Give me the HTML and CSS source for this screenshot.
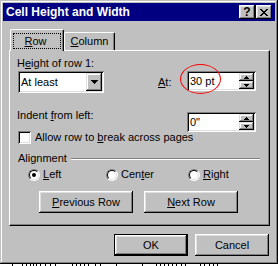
FILE: index.html
```html
<!DOCTYPE html>
<html>
<head>
<meta charset="utf-8">
<link rel="stylesheet" href="styles.css">
</head>
<body>
<div class="window">
  <div class="titlebar">
    <span class="title">Cell Height and Width</span>
    <span class="tbtn help">?</span>
    <span class="tbtn close"><svg width="8" height="7" viewBox="0 0 8 7"><path d="M0 0h2v1H0zM6 0h2v1H6zM1 1h2v1H1zM5 1h2v1H5zM2 2h4v1H2zM3 3h2v1H3zM2 4h4v1H2zM1 5h2v1H1zM5 5h2v1H5zM0 6h2v1H0zM6 6h2v1H6z"/></svg></span>
  </div>
  <div class="body">
    <div class="tabs">
      <div class="tab active"><span class="focus"><u>R</u>ow</span></div>
      <div class="tab"><span class="tabtext"><u>C</u>olumn</span></div>
    </div>
    <div class="panel">
      <div class="label first">H<u>e</u>ight of row 1:</div>
      <div class="row2">
        <div class="leftcell">
          <div class="combo">
            <span class="val">At least</span>
            <span class="dd"><svg width="7" height="4" viewBox="0 0 7 4"><path d="M0 0h7v1H0zM1 1h5v1H1zM2 2h3v1H2zM3 3h1v1H3z"/></svg></span>
          </div>
        </div>
        <span class="atlabel"><u>A</u>t:</span>
        <div class="spin">
          <span class="val">30 pt</span>
          <span class="spinbtns">
            <span class="sbtn"><svg width="5" height="3" viewBox="0 0 5 3"><path d="M2 0h1v1H2zM1 1h3v1H1zM0 2h5v1H0z"/></svg></span>
            <span class="sbtn"><svg width="5" height="3" viewBox="0 0 5 3"><path d="M0 0h5v1H0zM1 1h3v1H1zM2 2h1v1H2z"/></svg></span>
          </span>
          <span class="ellipse"></span>
        </div>
      </div>
      <div class="row3">
        <div class="label wide">Indent <u>f</u>rom left:</div>
        <div class="spin lower">
          <span class="val">0"</span>
          <span class="spinbtns">
            <span class="sbtn"><svg width="5" height="3" viewBox="0 0 5 3"><path d="M2 0h1v1H2zM1 1h3v1H1zM0 2h5v1H0z"/></svg></span>
            <span class="sbtn"><svg width="5" height="3" viewBox="0 0 5 3"><path d="M0 0h5v1H0zM1 1h3v1H1zM2 2h1v1H2z"/></svg></span>
          </span>
        </div>
      </div>
      <div class="checkrow">
        <span class="checkbox"></span>
        <span>Allow row to <u>b</u>reak across pages</span>
      </div>
      <div class="grouprow">
        <span>Alignment</span>
        <span class="etch"></span>
      </div>
      <div class="radiorow">
        <div class="opt o1"><span class="radio checked"></span><span><u>L</u>eft</span></div>
        <div class="opt o2"><span class="radio"></span><span>Cen<u>t</u>er</span></div>
        <div class="opt o3"><span class="radio"></span><span><u>R</u>ight</span></div>
      </div>
      <div class="btnrow">
        <div class="btn wide"><span><u>P</u>revious Row</span></div>
        <div class="btn wide"><span><u>N</u>ext Row</span></div>
      </div>
    </div>
    <div class="footer">
      <div class="btn dlg default"><span>OK</span></div>
      <div class="btn dlg"><span>Cancel</span></div>
    </div>
  </div>
</div>
<div class="ruler">
  <svg width="278" height="2" viewBox="0 0 278 2"><path d="M12 0h1v2h-1zM22 0h1v2h-1zM26 0h1v2h-1zM30 0h1v2h-1zM33 0h1v2h-1zM36 0h1v2h-1zM40 0h1v2h-1zM45 0h1v2h-1zM50 0h1v2h-1zM55 0h1v2h-1zM72 0h1v2h-1zM76 0h1v2h-1zM80 0h1v2h-1zM84 0h1v2h-1zM88 0h1v2h-1zM95 0h1v2h-1zM100 0h1v2h-1zM116 0h1v2h-1zM142 0h1v2h-1zM156 0h1v2h-1zM160 0h1v2h-1zM164 0h1v2h-1zM168 0h1v2h-1zM172 0h1v2h-1zM176 0h1v2h-1zM181 0h1v2h-1zM185 0h1v2h-1zM200 0h1v2h-1zM204 0h1v2h-1zM209 0h1v2h-1zM213 0h1v2h-1zM217 0h1v2h-1z"/></svg>
</div>
</body>
</html>
```

FILE: styles.css
```css
* { box-sizing: border-box; }
html, body { margin: 0; padding: 0; }
body {
  width: 278px;
  height: 266px;
  overflow: hidden;
  background: #fff;
  font-family: "Liberation Sans", Arial, sans-serif;
  font-size: 11px;
  line-height: 13px;
  color: #000;
}
u { text-decoration: underline; text-underline-offset: 1px; }

.window {
  width: 278px;
  height: 264px;
  background: #c0c0c0;
  padding: 3px;
  box-shadow: inset -1px -1px #000, inset 1px 1px #c0c0c0, inset -2px -2px #808080, inset 2px 2px #fff;
  display: flex;
  flex-direction: column;
}

.titlebar {
  height: 18px;
  background: #000080;
  display: flex;
  align-items: center;
  padding: 0 3px 0 3px;
  gap: 1px;
}
.title {
  flex: 1;
  color: #fff;
  font-weight: bold;
  font-size: 12px;
  line-height: 14px;
}
.tbtn {
  width: 16px;
  height: 14px;
  background: #c0c0c0;
  box-shadow: inset -1px -1px #000, inset 1px 1px #fff, inset -2px -2px #808080, inset 2px 2px #dfdfdf;
  display: flex;
  align-items: center;
  justify-content: center;
}
.help { font-weight: bold; font-size: 12px; line-height: 12px; padding-bottom: 1px; }
.close svg { display: block; }

.body {
  padding: 8px 5px 0 6px;
  display: flex;
  flex-direction: column;
}

.tabs {
  display: flex;
  align-items: flex-end;
  height: 21px;
  padding-left: 1px;
  position: relative;
  z-index: 1;
}
.tab {
  background: #c0c0c0;
  border-top: 1px solid #fff;
  border-left: 1px solid #fff;
  border-right: 1px solid #000;
  box-shadow: inset -1px 0 #808080;
  border-radius: 2px 2px 0 0;
  height: 18px;
  width: 51px;
  display: flex;
  justify-content: center;
}
.tab .tabtext { padding-top: 2px; }
.tab.active {
  width: 54px;
  height: 22px;
  margin-bottom: -1px;
  align-items: flex-start;
}
.focus {
  margin-top: 3px;
  width: 48px;
  height: 16px;
  outline: 1px dotted #000;
  outline-offset: -1px;
  display: flex;
  align-items: center;
  justify-content: center;
  padding-right: 3px;
}

.panel {
  width: 261px;
  height: 176px;
  border: 1px solid;
  border-color: #fff #000 #000 #fff;
  box-shadow: inset -1px -1px #808080;
  display: flex;
  flex-direction: column;
}

.label { padding-left: 7px; }
.label.first { margin-top: 6px; }

.row2 {
  margin-top: 1px;
  display: flex;
  height: 22px;
}
.leftcell { width: 148px; padding-left: 8px; }
.combo {
  width: 86px;
  height: 22px;
  background: #fff;
  box-shadow: inset 1px 1px #808080, inset -1px -1px #fff, inset 2px 2px #000, inset -2px -2px #dfdfdf;
  padding: 2px;
  display: flex;
  align-items: center;
}
.val { flex: 1; padding-left: 1px; }
.dd {
  width: 16px;
  height: 18px;
  background: #c0c0c0;
  box-shadow: inset -1px -1px #000, inset 1px 1px #dfdfdf, inset -2px -2px #808080, inset 2px 2px #fff;
  display: flex;
  align-items: center;
  justify-content: center;
}
.dd svg, .sbtn svg { display: block; }
.atlabel { width: 29px; margin-top: 5px; }

.spin {
  position: relative;
  width: 69px;
  height: 20px;
  background: #fff;
  box-shadow: inset 1px 1px #808080, inset -1px -1px #fff, inset 2px 2px #000, inset -2px -2px #dfdfdf;
  padding: 2px;
  display: flex;
  align-items: center;
}
.spin.lower { margin-top: 3px; }
.spinbtns {
  width: 15px;
  height: 16px;
  display: flex;
  flex-direction: column;
}
.sbtn {
  height: 8px;
  background: #c0c0c0;
  box-shadow: inset -1px -1px #000, inset 1px 1px #dfdfdf, inset -2px -2px #808080, inset 2px 2px #fff;
  display: flex;
  align-items: center;
  justify-content: center;
}
.ellipse {
  position: absolute;
  left: -7px;
  top: -7px;
  width: 41px;
  height: 30px;
  border: 1px solid #f00;
  border-radius: 50%;
}

.row3 {
  margin-top: 16px;
  display: flex;
  height: 22px;
}
.label.wide { width: 177px; }

.checkrow {
  display: flex;
  align-items: flex-start;
  padding-left: 8px;
  height: 13px;
  gap: 4px;
}
.checkbox {
  width: 13px;
  height: 13px;
  background: #fff;
  box-shadow: inset 1px 1px #808080, inset -1px -1px #fff, inset 2px 2px #000, inset -2px -2px #dfdfdf;
}

.grouprow {
  margin-top: 8px;
  display: flex;
  align-items: center;
  padding-left: 8px;
  padding-right: 9px;
  height: 13px;
}
.etch {
  flex: 1;
  margin-left: 4px;
  height: 2px;
  margin-top: 1px;
  border-top: 1px solid #808080;
  border-bottom: 1px solid #fff;
}

.radiorow {
  margin-top: 3px;
  display: flex;
  padding-left: 18px;
  height: 13px;
}
.opt { display: flex; align-items: flex-start; gap: 3px; }
.o1 { width: 78px; }
.o2 { width: 82px; }
.radio {
  width: 12px;
  height: 12px;
  margin-top: 1px;
  border-radius: 50%;
  border: 1px solid;
  border-color: #808080 #fff #fff #808080;
  position: relative;
  background: #dfdfdf;
}
.radio::before {
  content: "";
  position: absolute;
  left: 0; top: 0; right: 0; bottom: 0;
  border-radius: 50%;
  border: 1px solid;
  border-color: #000 #dfdfdf #dfdfdf #000;
  background: #fff;
}
.radio.checked::after {
  content: "";
  position: absolute;
  left: 3px; top: 3px;
  width: 4px; height: 4px;
  border-radius: 50%;
  background: #000;
}

.btnrow {
  margin-top: 10px;
  display: flex;
  padding-left: 29px;
  gap: 11px;
}
.btn {
  height: 22px;
  background: #c0c0c0;
  box-shadow: inset -1px -1px #000, inset 1px 1px #fff, inset -2px -2px #808080, inset 2px 2px #dfdfdf;
  display: flex;
  align-items: center;
  justify-content: center;
}
.btn.wide { width: 94px; }

.footer {
  margin-top: 8px;
  display: flex;
  justify-content: flex-end;
  padding-right: 1px;
  gap: 7px;
}
.btn.dlg { width: 74px; }
.btn.default {
  box-shadow: inset 0 0 0 1px #000, inset -2px -2px #000, inset 2px 2px #fff, inset -3px -3px #808080, inset 3px 3px #dfdfdf;
}

.ruler {
  height: 2px;
  background: #fff;
}
.ruler svg { display: block; }
```
